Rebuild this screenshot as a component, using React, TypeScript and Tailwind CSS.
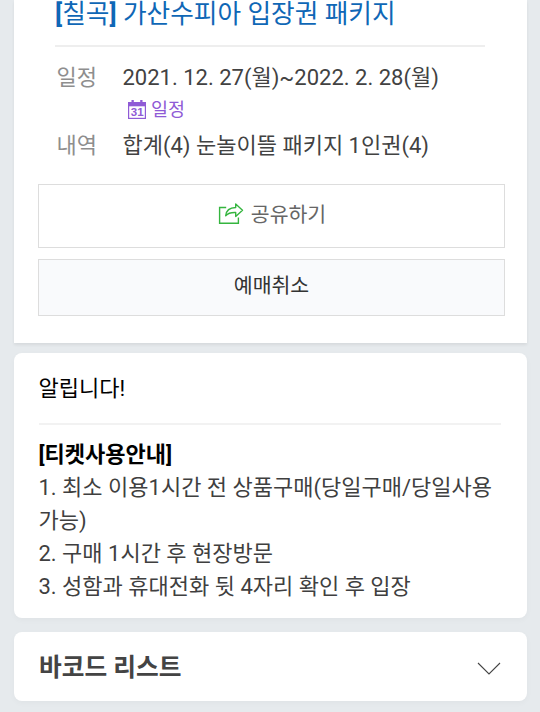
import type { ReactNode } from 'react';

const notices = [
    '1. 최소 이용1시간 전 상품구매(당일구매/당일사용가능)',
    '2. 구매 1시간 후 현장방문',
    '3. 성함과 휴대전화 뒷 4자리 확인 후 입장',
];

function CalendarIcon() {
    return (
        <svg className="mb-0.5 w-[18px] h-[19px] shrink-0" viewBox="0 0 18 19">
            <path d="M0 2h18v17H0z" fill="#8f5bd6" />
            <path d="M1.2 6.3h15.6v11.5H1.2z" fill="#fff" />
            <path d="M3.5 0h2.3v3H3.5zM12.2 0h2.3v3h-2.3z" fill="#8f5bd6" />
            <text x="9.2" y="15.9" textAnchor="middle" fontSize="11.5" fontWeight="700" fontFamily="Liberation Sans, sans-serif" fill="#8f5bd6">
                31
            </text>
        </svg>
    );
}

function ShareIcon() {
    return (
        <svg className="mb-0.5 w-[26px] h-[24px] shrink-0" viewBox="0 0 26 24" fill="none" stroke="#35b53f" strokeWidth="1.4">
            <path d="M8.2 5.5H1.6v15.8h18.8v-5.8" />
            <path d="M7.7 13.7c.5-5.2 3.6-8 10-8.2V2l6.8 6.2-6.8 6.2v-3.9c-4.8-.2-7.7.6-10 3.2z" strokeLinejoin="round" />
        </svg>
    );
}

function InfoRow({ label, children }: { label: string; children: ReactNode }) {
    return (
        <div className="flex text-[22px] leading-9">
            <dt className="w-[66px] shrink-0 text-[#8e8e8e]">{label}</dt>
            <dd className="text-[#424242] whitespace-nowrap">{children}</dd>
        </div>
    );
}

export default function App() {
    return (
        <div className="h-[712px] overflow-hidden bg-[#e6eaed] pl-3.5 pr-[13px] font-[Roboto,'Noto_Sans_CJK_KR',sans-serif]">
            {/* Ticket info */}
            <section className="h-[343px] bg-white shadow-[0_2px_3px_rgba(0,0,0,0.07)]">
                <div className="ml-[41px] mr-[42px] h-[47px] border-b-2 border-[#eeeeee]">
                    <h1 className="text-[25.7px] leading-[28px] text-[#0f67b6] whitespace-nowrap">
                        <b>[</b>칠곡<b>]</b> 가산수피아 입장권 패키지
                    </h1>
                </div>

                <dl className="h-[137px] pl-[42.5px] pt-[13px]">
                    <InfoRow label="일정">2021. 12. 27(월)~2022. 2. 28(월)</InfoRow>
                    <a className="ml-[71.5px] flex h-[32px] items-center gap-[5px] pb-[3px] text-[18.5px] text-[#8f5bd6]">
                        <CalendarIcon />
                        일정
                    </a>
                    <InfoRow label="내역">합계(4) 눈놀이뜰 패키지 1인권(4)</InfoRow>
                </dl>

                <div className="flex flex-col gap-[11px] pl-6 pr-[22px]">
                    <button className="flex h-16 items-center justify-center gap-[7px] border border-[#dddddd] pb-0.5 pl-px text-[20.5px] text-[#666666]">
                        <ShareIcon />
                        공유하기
                    </button>
                    <button className="h-[57px] border border-[#dddddd] bg-[#f9fafc] pb-0.5 text-[20.5px] text-[#333333]">
                        예매취소
                    </button>
                </div>
            </section>

            {/* Notice */}
            <section className="mt-2.5 h-[265px] rounded-lg bg-white pl-[24.5px] pr-[26px] shadow-[0_2px_6px_rgba(0,0,0,0.03)]">
                <h2 className="h-[72px] border-b-2 border-[#f2f2f2] pt-[19px] text-[22px] leading-[33px] text-black">
                    알립니다!
                </h2>
                <div className="-mr-2 pt-[13px] text-[22px] leading-[33px] text-[#3f3f3f] break-all">
                    <p className="font-bold text-black">[티켓사용안내]</p>
                    {notices.map((notice) => (
                        <p key={notice}>{notice}</p>
                    ))}
                </div>
            </section>

            {/* Barcode list */}
            <section className="mt-3.5 flex h-[69px] items-center justify-between rounded-lg bg-white pl-[25px] pr-[26px] shadow-[0_2px_6px_rgba(0,0,0,0.03)]">
                <h2 className="pt-0.5 text-[24.7px] font-bold text-[#444444]">바코드 리스트</h2>
                <svg className="mt-1 h-[13px] w-6" viewBox="0 0 24 13" fill="none" stroke="#444444" strokeWidth="1.1">
                    <path d="M1 1l11 11L23 1" />
                </svg>
            </section>
        </div>
    );
}
